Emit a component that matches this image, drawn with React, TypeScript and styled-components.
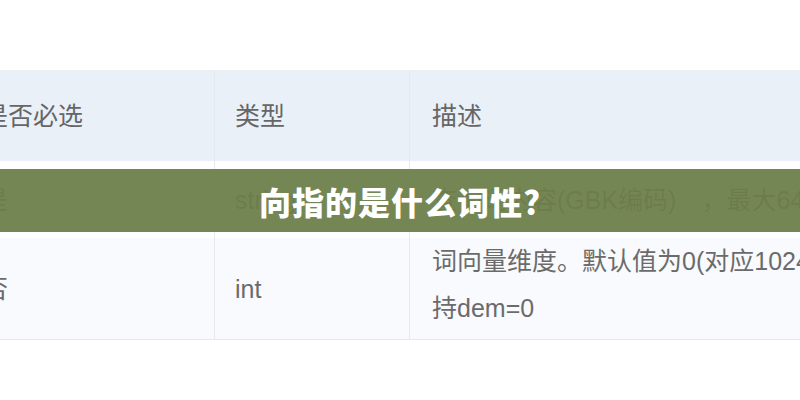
import styled, { createGlobalStyle } from 'styled-components';

const GlobalStyle = createGlobalStyle`
  html, body {
    margin: 0;
    padding: 0;
    background: #ffffff;
  }
  body {
    font-family: "Liberation Sans", "Noto Sans CJK SC", sans-serif;
  }
`;

const Page = styled.div`
  position: relative;
  width: 800px;
  height: 400px;
  overflow: hidden;
  background: #ffffff;
  padding-top: 70px;
  box-sizing: border-box;
`;

const Table = styled.div`
  display: grid;
  grid-template-columns: 252px 195px 600px;
  margin-left: -37px;
  width: 1047px;
  border-top: 1px solid #eceef2;
  border-bottom: 1px solid #e6e8ec;
  color: #6b6b6b;
  font-size: 25px;
`;

const Cell = styled.div<{ $bg?: string; $h: number; $last?: boolean }>`
  display: flex;
  flex-direction: column;
  justify-content: center;
  box-sizing: border-box;
  height: ${(p) => p.$h}px;
  padding: 0 20px;
  background: ${(p) => p.$bg || '#ffffff'};
  border-right: ${(p) => (p.$last ? 'none' : '1px solid #e6e9ee')};
  white-space: nowrap;
  line-height: 30px;
`;

const HeadCell = styled(Cell)`
  color: #666666;
`;

const HeadDesc = styled(HeadCell)`
  padding-left: 22px;
`;

const DescCell = styled(Cell)`
  padding-left: 22px;
`;

const MultiCell = styled(DescCell)`
  padding-bottom: 8px;
`;

const Line = styled.span`
  display: block;
  height: 47px;
  line-height: 47px;
`;

const Band = styled.div`
  position: absolute;
  left: 0;
  right: 0;
  top: 169px;
  height: 63px;
  background: rgba(108, 126, 74, 0.94);
  display: flex;
  align-items: center;
  justify-content: center;
  color: #ffffff;
  font-family: "Noto Sans CJK SC", sans-serif;
  font-weight: 900;
  font-size: 32px;
  letter-spacing: 1px;
`;

export default function App() {
  return (
    <>
      <GlobalStyle />
      <Page>
        <Table>
          <HeadCell $h={90} $bg="#eaf0f8">是否必选</HeadCell>
          <HeadCell $h={90} $bg="#eaf0f8">类型</HeadCell>
          <HeadDesc $h={90} $bg="#eaf0f8" $last>
            描述
          </HeadDesc>

          <Cell $h={77}>是</Cell>
          <Cell $h={77}>string</Cell>
          <DescCell $h={77} $last>
            查询词内容(GBK编码)　，最大64字节
          </DescCell>

          <Cell $h={101} $bg="#f8fafd">否</Cell>
          <Cell $h={101} $bg="#f8fafd">int</Cell>
          <MultiCell $h={101} $bg="#f8fafd" $last>
            <Line>词向量维度。默认值为0(对应1024维)，目前仅支</Line>
            <Line>持dem=0</Line>
          </MultiCell>
        </Table>
        <Band>向指的是什么词性?</Band>
      </Page>
    </>
  );
}
